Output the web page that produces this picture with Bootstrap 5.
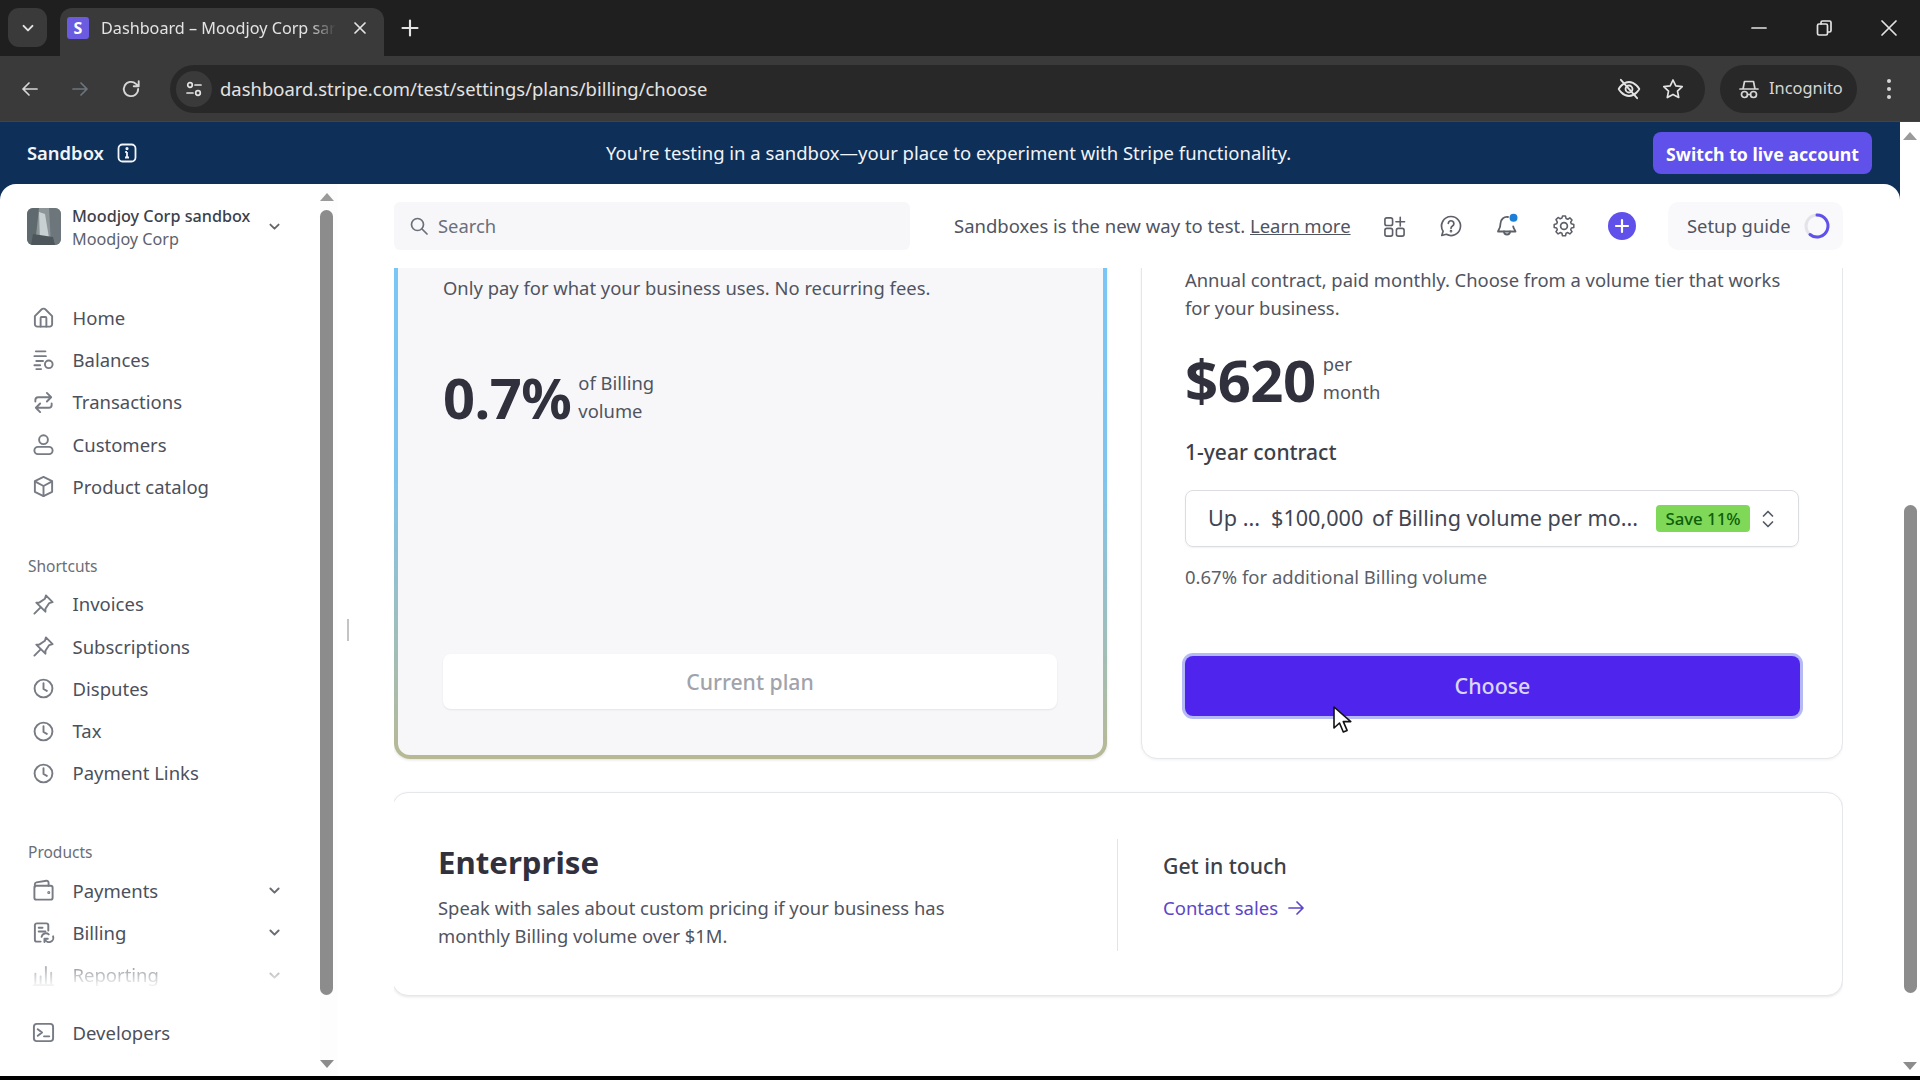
<!DOCTYPE html>
<html lang="en">
<head>
<meta charset="utf-8">
<title>Dashboard – Moodjoy Corp sandbox</title>
<link href="https://cdn.jsdelivr.net/npm/bootstrap@5.3.0/dist/css/bootstrap.min.css" rel="stylesheet">
<style>
html,body{height:100%;overflow:hidden}
body{font-family:"Noto Sans","Open Sans",sans-serif;font-size:18.4px;color:#414552;background:#000;width:1920px;height:1080px}
svg{display:block;flex:none}
.ico{fill:none;stroke:currentColor;stroke-width:1.7;stroke-linecap:round;stroke-linejoin:round}

/* browser chrome */
.tabstrip{height:56px;background:#1f1f1f;color:#e3e3e3}
.tab-toggle{width:39px;height:39px;margin:8px 13px 0 8px;background:#3a3a3a;border-radius:11px}
.tab-live{width:324px;height:48px;margin-top:8px;padding:0 16px 8px 7px;background:#3a3a3a;border-radius:12px 12px 0 0;font-size:16.2px}
.favicon{width:22px;height:22px;background:#6a5be0;border-radius:3px;color:#fff;font-weight:700;font-size:16px;line-height:22px;text-align:center;margin-right:12px}
.tab-title{white-space:nowrap;-webkit-mask-image:linear-gradient(90deg,#000 88%,transparent);mask-image:linear-gradient(90deg,#000 88%,transparent)}
.newtab{margin:18px 0 0 16px}
.win-btns{gap:47px;padding-right:22px;height:56px}
.toolbar{height:66px;background:#3a3a3a;color:#d6d6d6;padding-left:20px;padding-right:28px;border-bottom:1px solid #33475c}
.tool-nav{gap:30px;width:150px}
.urlbar{width:1535px;height:48px;background:#282828;border-radius:24px;padding:0 20px 0 6px;color:#e3e3e3;font-size:18.45px}
.site-chip{width:36px;height:36px;background:#3a3a3a;border-radius:50%;margin-right:8px}
.eye-off{margin-right:19px}
.incog{width:137px;height:48px;background:#282828;border-radius:24px;margin-left:15px;padding-left:18px;gap:9px;font-size:16.4px}

/* page frame */
.viewport{height:954px}
.frame{width:1900px;background:#0e2f57}
.page-bar{width:20px;background:#fff;padding:10px 3px 6px 3px}
.bar-thumb{width:13px;height:488px;background:#8c8c8c;border-radius:7px;margin-top:365px}
.tri-up{width:0;height:0;border-left:7px solid transparent;border-right:7px solid transparent;border-bottom:8px solid #9a9a9a}
.tri-down{width:0;height:0;border-left:7px solid transparent;border-right:7px solid transparent;border-top:8px solid #8c8c8c}
.tri-end{margin-top:auto}
.sbx-banner{height:62px;padding:0 28px 0 27px;color:#f1f4f8}
.sbx-name{font-size:18.4px;font-weight:600;gap:13px;width:579px}
.sbx-msg{font-size:18.5px;width:740px;white-space:nowrap}
.btn-live{height:42px;width:219px;background:#5f51ea;color:#fff;font-weight:700;font-size:17.7px;line-height:44px;border:0;border-radius:8px;padding:0;margin-left:auto}
.btn-live:hover{background:#5f51ea;color:#fff}
.panel{height:892px;background:#fff;border-radius:16px 16px 0 0;overflow:hidden}
.endline{height:4px;background:#000}

/* sidebar */
.side{width:338px}
.side-nav{width:320px;padding:24px 0 0 27px}
.acct{height:64px;gap:11px}
.avatar{width:34px;height:37px;border-radius:6px;overflow:hidden}
.acct-text{margin-top:-3px}
.acct-name{font-size:16.2px;font-weight:500;color:#3c4049;line-height:23px}
.acct-sub{font-size:16.2px;color:#5d616c;line-height:23px}
.acct-chev{margin-left:7px;margin-top:12px;color:#666}
.nav-row{height:42.3px;padding:0;color:#4c505b;gap:17.5px;font-size:18.5px;width:254px}
.nav-row svg.lead{width:23px;height:23px;margin-left:5px;color:#777b84;stroke-width:2}
.nav-row .more{margin-left:auto;color:#6a6d75;stroke-width:1.8}
.nav-cap{height:28px;line-height:30px;margin-top:43px;margin-bottom:4px;font-size:15.5px;color:#6a6e78;margin-left:1px}
.nav-main{padding-top:24.5px}
.fade-row{-webkit-mask-image:linear-gradient(180deg,rgba(0,0,0,.7) 20%,rgba(0,0,0,.1) 72%);mask-image:linear-gradient(180deg,rgba(0,0,0,.7) 20%,rgba(0,0,0,.1) 72%)}
.dev-row{margin-top:15px}
.side-rail{width:18px;padding:9px 0 0 0;background:#fdfdfd}
.rail-inner{width:13px}
.rail-thumb{width:13px;height:785px;background:#8c8c8c;border-radius:7px;margin-top:9px}
.rail-down{margin-top:65px}
.grip-col{width:56px}
.grip{width:2px;height:22px;background:#c4c4c4;margin-left:9px}

/* content */
.work{width:1449px}
.topbar{height:84px;width:1449px}
.searchbox{width:516px;height:48px;background:#f7f7fa;border-radius:6px;padding-left:15px;gap:9px;color:#6a6f7a;font-size:18.4px;margin-right:44px}
.hint{font-size:18.5px;color:#50545f;white-space:nowrap;width:396px}
.hint a{color:#50545f}
.tools{color:#5d6069;gap:32.5px;margin-left:33px}
.plus-disc{width:28px;height:28px;border-radius:50%;background:#5f51ea;margin-left:0}
.setup{margin-left:auto;width:175px;height:48px;background:#f9f9fb;border-radius:10px;padding-left:19px;gap:12px;font-size:18.4px;color:#50545f}
.scroller{overflow:hidden;height:808px}
.plan-row{gap:34px;height:511px;margin-top:-20px}
.plan-now{width:713px;padding:22px 45px 46px 45px;background:linear-gradient(#f7f7fa,#f7f7fa) padding-box,linear-gradient(180deg,#79c6f6 0%,#7fc4ee 45%,#b7b994 100%) border-box;border:4px solid transparent;border-radius:16px;box-shadow:0 1px 3px rgba(0,0,0,.12)}
.plan-next{width:702px;padding:17px 43px 42px 43px;background:#fff;border:1px solid #e6e7eb;border-radius:16px;box-shadow:0 1px 3px rgba(0,0,0,.06)}
.copy{font-size:18.4px;line-height:28px;color:#50545f;margin:0}
.price-row{height:56px;gap:7px}
.price-now{margin-top:67px}
.price-next{margin-top:28px}
.price-big{font-weight:700;font-size:58px;line-height:56px;color:#30313d;letter-spacing:-.5px}
.price-low{font-size:56px}
.price-drop{margin-top:4px}
.price-unit{font-size:18.4px;line-height:28px;color:#50545f}
.btn-current{height:55px;width:614px;background:#fff;border:0;border-radius:8px;color:#a0a3ab;font-size:21.2px;font-weight:500;box-shadow:0 1px 2px rgba(0,0,0,.08);opacity:1}
.term{font-size:21px;font-weight:500;line-height:28px;color:#3c4049;margin-top:32px}
.select-box{height:57px;width:614px;margin-top:24px;border:1px solid #dcdde2;border-radius:8px;padding:0 23px 0 22px;font-size:21.6px;color:#414552;box-shadow:0 1px 2px rgba(0,0,0,.06);white-space:nowrap}
.sel-a{margin-right:11px}
.sel-b{margin-right:8.6px}
.save{background:#7fd858;color:#0d5f0a;font-weight:500;font-size:16.8px;height:27px;line-height:27px;width:94px;text-align:center;border-radius:4px;margin-left:auto}
.updown{margin-left:11px;color:#555a66}
.extra{font-size:18.5px;line-height:28px;color:#5b5f6a;margin-top:16px}
.btn-pick{height:60px;width:615px;background:#4f25ed;color:#dcd6ff;border:0;border-radius:8px;font-size:21.4px;font-weight:500;box-shadow:0 0 0 3px #b5baf6}
.btn-pick:hover{background:#4f25ed;color:#dcd6ff}
.ent{width:1451px;height:204px;margin-top:33px;margin-left:-2px;background:#fff;border:1px solid #e6e7eb;border-radius:16px;box-shadow:0 1px 3px rgba(0,0,0,.1);padding:46px 45px 0 45px}
.ent-left{width:680px;height:112px;border-right:1px solid #e3e4e8}
.ent-name{font-size:31.2px;font-weight:700;line-height:40px;color:#30313d;margin:3px 0 12px}
.ent-right{padding-left:45px}
.touch{font-size:21.2px;font-weight:500;line-height:28px;color:#3c4049;margin:13px 0 14px}
.contact{font-size:18.5px;line-height:28px;color:#5b46c8;text-decoration:none;gap:9px}
.cursor-mark{position:absolute;left:1332px;top:705px;z-index:5}
</style>
</head>
<body class="position-relative">
<svg width="0" height="0" class="position-absolute">
  <defs>
    <symbol id="i-home" viewBox="0 0 24 24"><path d="M3 10.5 9.6 3.9a3.4 3.4 0 0 1 4.8 0L21 10.5V19a2.5 2.5 0 0 1-2.5 2.5h-13A2.5 2.5 0 0 1 3 19z"/><path d="M9 21.5V12.5a1 1 0 0 1 1-1h4a1 1 0 0 1 1 1v9"/></symbol>
    <symbol id="i-bal" viewBox="0 0 24 24"><path d="M4 3.5h10M2.5 8.5h12M4.5 13.5h7M2.5 18h6M4.5 22h5"/><circle cx="17.5" cy="17" r="4"/></symbol>
    <symbol id="i-txn" viewBox="0 0 24 24"><path d="M3.5 11V9.5a3 3 0 0 1 3-3H20M15.5 2l4.5 4.5-4.5 4.5"/><path d="M20.5 13v1.5a3 3 0 0 1-3 3H4M8.5 13 4 17.5 8.5 22"/></symbol>
    <symbol id="i-cus" viewBox="0 0 24 24"><circle cx="12" cy="7" r="4.6"/><rect x="2.5" y="14.5" width="19" height="7.5" rx="3.7"/></symbol>
    <symbol id="i-box" viewBox="0 0 24 24"><path d="M12 2 21 6.500v11L12 22l-9-4.500v-11z" /><path d="M3.500 7 12 11.500 20.500 7M12 11.500V22"/></symbol>
    <symbol id="i-pin" viewBox="0 0 24 24"><path d="M2.500 21.500 9 15"/><path d="M14.500 2.500 21.500 9.500 18 10.500 14 16.500 14 19.500 4.500 10 7.500 10 13.500 6z"/></symbol>
    <symbol id="i-clk" viewBox="0 0 24 24"><circle cx="12" cy="12" r="9.300"/><path d="M12 6.500V12.500l3.500 2"/></symbol>
    <symbol id="i-pay" viewBox="0 0 24 24"><path d="M3 8V5.500a2 2 0 0 1 1.600-2L15 1.800a2 2 0 0 1 2.300 2V7"/><rect x="2.500" y="7" width="19" height="14.500" rx="2"/><circle cx="17.500" cy="14" r=".6"/></symbol>
    <symbol id="i-bil" viewBox="0 0 24 24"><path d="M9 21.500H5a2 2 0 0 1-2-2v-15a2 2 0 0 1 2-2h10a2 2 0 0 1 2 2V10"/><path d="M7 7h4M7 11h7"/><path d="M22 16a4.500 4.500 0 0 1-8.500 3M10 16.500a4.500 4.500 0 0 1 7.500-2.500M13 22v-3.500h3.500"/></symbol>
    <symbol id="i-rep" viewBox="0 0 24 24"><path d="M3.500 21V10M9 21V13M14.500 21V3M20 21V9M2 22h20"/></symbol>
    <symbol id="i-dev" viewBox="0 0 24 24"><rect x="2" y="3" width="20" height="18" rx="3"/><path d="M6 8.500 10.500 12 6 15.500M12.500 16H18"/></symbol>
    <symbol id="i-chev" viewBox="0 0 12 12"><path d="M2.200 4.200 6 8l3.800-3.800"/></symbol>
  </defs>
</svg>

<div class="tabstrip d-flex align-items-start">
  <div class="tab-toggle d-flex align-items-center justify-content-center"><svg class="ico" width="14" height="14" viewBox="0 0 12 12" stroke-width="2"><use href="#i-chev"/></svg></div>
  <div class="tab-live d-flex align-items-center">
    <span class="favicon">S</span>
    <span class="tab-title">Dashboard – Moodjoy Corp sar</span>
    <svg class="ico ms-auto" width="16" height="16" viewBox="0 0 16 16" stroke-width="2"><path d="M3 3l10 10M13 3 3 13"/></svg>
  </div>
  <svg class="ico newtab" width="20" height="20" viewBox="0 0 16 16" stroke-width="1.8"><path d="M8 2v12M2 8h12"/></svg>
  <div class="win-btns d-flex align-items-center ms-auto">
    <svg class="ico" width="18" height="18" viewBox="0 0 18 18" stroke-width="1.2"><path d="M2 9h14"/></svg>
    <svg class="ico" width="18" height="18" viewBox="0 0 18 18" stroke-width="1.2"><rect x="2.500" y="5" width="10" height="11" rx="1.500"/><path d="M6 5V3.500A1.500 1.500 0 0 1 7.500 2h7A1.500 1.500 0 0 1 16 3.500v8a1.500 1.500 0 0 1-1.500 1.500H13"/></svg>
    <svg class="ico" width="18" height="18" viewBox="0 0 18 18" stroke-width="1.3"><path d="M2 2l14 14M16 2 2 16"/></svg>
  </div>
</div>

<div class="toolbar d-flex align-items-center">
  <div class="tool-nav d-flex align-items-center">
    <svg class="ico" width="20" height="20" viewBox="0 0 20 20" stroke-width="1.8"><path d="M17 10H3M9 4l-6 6 6 6"/></svg>
    <svg class="ico text-secondary" width="20" height="20" viewBox="0 0 20 20" stroke-width="1.8"><path d="M3 10h14M11 4l6 6-6 6"/></svg>
    <svg class="ico" width="22" height="22" viewBox="0 0 20 20" stroke-width="1.8"><path d="M16.500 10a6.500 6.500 0 1 1-2-4.700L17 7.500M17 3v4.500h-4.500"/></svg>
  </div>
  <div class="urlbar d-flex align-items-center">
    <span class="site-chip d-flex align-items-center justify-content-center"><svg class="ico" width="18" height="18" viewBox="0 0 18 18" stroke-width="1.500"><circle cx="5" cy="5" r="2.300"/><path d="M10 5h6M2 13h6"/><circle cx="13" cy="13" r="2.300"/></svg></span>
    <span>dashboard.stripe.com/test/settings/plans/billing/choose</span>
    <svg class="ico ms-auto eye-off" width="26" height="26" viewBox="0 0 24 24" stroke-width="1.700"><path d="M2.500 12S6 5.500 12 5.500 21.500 12 21.500 12 18 18.500 12 18.500 2.500 12 2.500 12z"/><circle cx="12" cy="12" r="3.200"/><path d="M4.500 3.500l15 17"/></svg>
    <svg class="ico" width="24" height="24" viewBox="0 0 24 24" stroke-width="1.700"><path d="M12 3l2.800 5.900 6.400.8-4.700 4.400 1.200 6.400L12 17.400l-5.700 3.100 1.200-6.400L2.800 9.700l6.400-.8z"/></svg>
  </div>
  <div class="incog d-flex align-items-center">
    <svg class="ico" width="22" height="22" viewBox="0 0 22 22" stroke-width="1.600"><path d="M2 11h18M5 11l1.500-7.500h9L17 11"/><circle cx="6.500" cy="16.500" r="3"/><circle cx="15.500" cy="16.500" r="3"/><path d="M9.500 16.500h3"/></svg>
    <span>Incognito</span>
  </div>
  <svg class="ms-auto" width="6" height="22" viewBox="0 0 6 22" fill="#d6d6d6"><circle cx="3" cy="3" r="2"/><circle cx="3" cy="11" r="2"/><circle cx="3" cy="19" r="2"/></svg>
</div>

<div class="viewport d-flex">
  <div class="frame d-flex flex-column">
    <div class="sbx-banner d-flex align-items-center">
      <div class="sbx-name d-flex align-items-center">
        <span>Sandbox</span>
        <svg width="20" height="20" viewBox="0 0 20 20" fill="none" stroke="#f1f4f8" stroke-width="1.800"><rect x="1.500" y="1.500" width="17" height="17" rx="4"/><path d="M10 9v5.500M8 14.500h4M8.200 9H10"/><circle cx="10" cy="5.600" r=".7"/></svg>
      </div>
      <div class="sbx-msg">You're testing in a sandbox—your place to experiment with Stripe functionality.</div>
      <button class="btn btn-live" type="button">Switch to live account</button>
    </div>
    <div class="panel d-flex">
      <aside class="side d-flex">
        <div class="side-nav">
          <div class="acct d-flex align-items-start">
            <svg class="avatar" viewBox="0 0 34 37"><rect width="34" height="37" fill="#8d9599"/><path d="M0 0h12L8 37H0z" fill="#5f6a6e"/><path d="M12 4l6 2 4 24-9 4z" fill="#c9d0d1"/><path d="M22 0h12v37H24z" fill="#6d777b"/><path d="M6 26l20 3 2 8H4z" fill="#4d575b"/></svg>
            <div class="acct-text">
              <div class="acct-name">Moodjoy Corp sandbox</div>
              <div class="acct-sub">Moodjoy Corp</div>
            </div>
            <svg class="ico acct-chev" width="13" height="13" viewBox="0 0 12 12" stroke-width="1.700"><use href="#i-chev"/></svg>
          </div>
          <nav class="nav flex-column nav-main">
            <a class="nav-link nav-row d-flex align-items-center" href="#"><svg class="ico lead"><use href="#i-home"/></svg>Home</a>
            <a class="nav-link nav-row d-flex align-items-center" href="#"><svg class="ico lead"><use href="#i-bal"/></svg>Balances</a>
            <a class="nav-link nav-row d-flex align-items-center" href="#"><svg class="ico lead"><use href="#i-txn"/></svg>Transactions</a>
            <a class="nav-link nav-row d-flex align-items-center" href="#"><svg class="ico lead"><use href="#i-cus"/></svg>Customers</a>
            <a class="nav-link nav-row d-flex align-items-center" href="#"><svg class="ico lead"><use href="#i-box"/></svg>Product catalog</a>
            <div class="nav-cap">Shortcuts</div>
            <a class="nav-link nav-row d-flex align-items-center" href="#"><svg class="ico lead"><use href="#i-pin"/></svg>Invoices</a>
            <a class="nav-link nav-row d-flex align-items-center" href="#"><svg class="ico lead"><use href="#i-pin"/></svg>Subscriptions</a>
            <a class="nav-link nav-row d-flex align-items-center" href="#"><svg class="ico lead"><use href="#i-clk"/></svg>Disputes</a>
            <a class="nav-link nav-row d-flex align-items-center" href="#"><svg class="ico lead"><use href="#i-clk"/></svg>Tax</a>
            <a class="nav-link nav-row d-flex align-items-center" href="#"><svg class="ico lead"><use href="#i-clk"/></svg>Payment Links</a>
            <div class="nav-cap">Products</div>
            <a class="nav-link nav-row d-flex align-items-center" href="#"><svg class="ico lead"><use href="#i-pay"/></svg>Payments<svg class="ico more" width="13" height="13" viewBox="0 0 12 12"><use href="#i-chev"/></svg></a>
            <a class="nav-link nav-row d-flex align-items-center" href="#"><svg class="ico lead"><use href="#i-bil"/></svg>Billing<svg class="ico more" width="13" height="13" viewBox="0 0 12 12"><use href="#i-chev"/></svg></a>
            <a class="nav-link nav-row d-flex align-items-center fade-row" href="#"><svg class="ico lead"><use href="#i-rep"/></svg>Reporting<svg class="ico more" width="13" height="13" viewBox="0 0 12 12"><use href="#i-chev"/></svg></a>
            <a class="nav-link nav-row d-flex align-items-center dev-row" href="#"><svg class="ico lead"><use href="#i-dev"/></svg>Developers</a>
          </nav>
        </div>
        <div class="side-rail d-flex flex-column">
          <div class="rail-inner d-flex flex-column align-items-center">
            <div class="tri-up"></div>
            <div class="rail-thumb"></div>
            <div class="tri-down rail-down"></div>
          </div>
        </div>
      </aside>
      <div class="grip-col d-flex align-items-center"><div class="grip"></div></div>
      <main class="work">
        <div class="topbar d-flex align-items-center">
          <div class="searchbox d-flex align-items-center">
            <svg class="ico" width="20" height="20" viewBox="0 0 20 20" stroke-width="1.900"><circle cx="8.500" cy="8.500" r="6"/><path d="M13 13l5 5"/></svg>
            <span>Search</span>
          </div>
          <div class="hint">Sandboxes is the new way to test. <a href="#">Learn more</a></div>
          <div class="tools d-flex align-items-center">
            <svg class="ico" width="23" height="23" viewBox="0 0 24 24" stroke-width="1.900"><rect x="2" y="3" width="8" height="8" rx="2"/><rect x="2" y="14" width="8" height="8" rx="2"/><rect x="14" y="14" width="8" height="8" rx="2"/><path d="M18 2.500v9M13.500 7h9"/></svg>
            <svg class="ico" width="24" height="24" viewBox="0 0 24 24" stroke-width="1.800"><path d="M12 2.500a9.500 9.500 0 1 1-4.600 17.800L2.800 21.500l1.300-4.300A9.500 9.500 0 0 1 12 2.500z"/><path d="M9.300 9.400A2.800 2.800 0 1 1 13.500 12c-1 .6-1.500 1.100-1.500 2.200"/><circle cx="12" cy="17.200" r=".5"/></svg>
            <svg width="24" height="26" viewBox="0 0 24 26" fill="none" stroke="currentColor" stroke-width="1.800" stroke-linecap="round" stroke-linejoin="round"><path d="M13 4a6.500 6.500 0 0 0-7.500 6.500c0 5-2.500 7-2.500 8h17.500c0-1-1.800-2.500-2.300-5"/><path d="M9 18.500a3 3 0 0 0 6 0"/><circle cx="18.500" cy="4.800" r="4" fill="#1c7fd6" stroke="none"/></svg>
            <svg class="ico" width="24" height="24" viewBox="0 0 24 24" stroke-width="1.700"><circle cx="12" cy="12" r="3.400"/><path d="M10.300 2.500h3.400l.6 2.700 1.900.8 2.300-1.500 2.400 2.400-1.500 2.300.8 1.900 2.700.6v3.400l-2.700.6-.8 1.900 1.500 2.300-2.400 2.400-2.300-1.500-1.900.8-.6 2.700h-3.400l-.6-2.700-1.900-.8-2.300 1.500-2.400-2.400 1.500-2.300-.8-1.900-2.700-.6v-3.400l2.700-.6.800-1.900L3.100 6.400l2.400-2.400 2.300 1.500 1.900-.8z" transform="translate(12 12) scale(.9) translate(-12 -13.500)"/></svg>
            <span class="plus-disc d-flex align-items-center justify-content-center"><svg width="16" height="16" viewBox="0 0 16 16" stroke="#fff" stroke-width="2.200" stroke-linecap="round"><path d="M8 2v12M2 8h12"/></svg></span>
          </div>
          <div class="setup d-flex align-items-center">
            <span>Setup guide</span>
            <svg width="28" height="28" viewBox="0 0 28 28" fill="none"><circle cx="14" cy="14" r="11" stroke="#e3e3ea" stroke-width="3"/><path d="M14 3a11 11 0 1 1-7 19.500" stroke="#5f51ea" stroke-width="3" stroke-linecap="round"/></svg>
          </div>
        </div>
        <div class="scroller">
          <div class="plan-row d-flex">
            <section class="card plan-now d-flex flex-column">
              <p class="copy">Only pay for what your business uses. No recurring fees.</p>
              <div class="price-row price-now d-flex align-items-center">
                <div class="price-big price-low">0.7%</div>
                <div class="price-unit">of Billing<br>volume</div>
              </div>
              <button class="btn btn-current mt-auto" type="button">Current plan</button>
            </section>
            <section class="card plan-next d-flex flex-column">
              <p class="copy">Annual contract, paid monthly. Choose from a volume tier that works for your business.</p>
              <div class="price-row price-next d-flex align-items-center">
                <div class="price-big price-drop">$620</div>
                <div class="price-unit">per<br>month</div>
              </div>
              <div class="term">1-year contract</div>
              <div class="select-box d-flex align-items-center">
                <span class="sel-a">Up ...</span><span class="sel-b">$100,000</span><span>of Billing volume per mo...</span>
                <span class="save">Save 11%</span>
                <svg class="ico updown" width="14" height="22" viewBox="0 0 14 22" stroke-width="1.800"><path d="M2.500 8 7 3.500 11.500 8M2.500 14 7 18.500 11.500 14"/></svg>
              </div>
              <div class="extra">0.67% for additional Billing volume</div>
              <button class="btn btn-pick mt-auto" type="button">Choose</button>
            </section>
          </div>
          <section class="card ent flex-row">
            <div class="ent-left">
              <h2 class="ent-name">Enterprise</h2>
              <p class="copy">Speak with sales about custom pricing if your business has<br>monthly Billing volume over $1M.</p>
            </div>
            <div class="ent-right">
              <div class="touch">Get in touch</div>
              <a class="contact d-inline-flex align-items-center" href="#">Contact sales
                <svg class="ico" width="18" height="18" viewBox="0 0 18 18" stroke-width="1.800"><path d="M2 9h14M10 3l6 6-6 6"/></svg>
              </a>
            </div>
          </section>
        </div>
      </main>
    </div>
  </div>
  <div class="page-bar d-flex flex-column align-items-center">
    <div class="tri-up"></div>
    <div class="bar-thumb"></div>
    <div class="tri-down tri-end"></div>
  </div>
</div>
<div class="endline"></div>
<svg class="cursor-mark" width="20" height="30" viewBox="0 0 20 30"><path d="M2 2v21l5.500-5 3.800 9 3.800-1.600-3.800-8.800h7.500z" fill="#fff" stroke="#111" stroke-width="1.600" stroke-linejoin="round"/></svg>
</body>
</html>
